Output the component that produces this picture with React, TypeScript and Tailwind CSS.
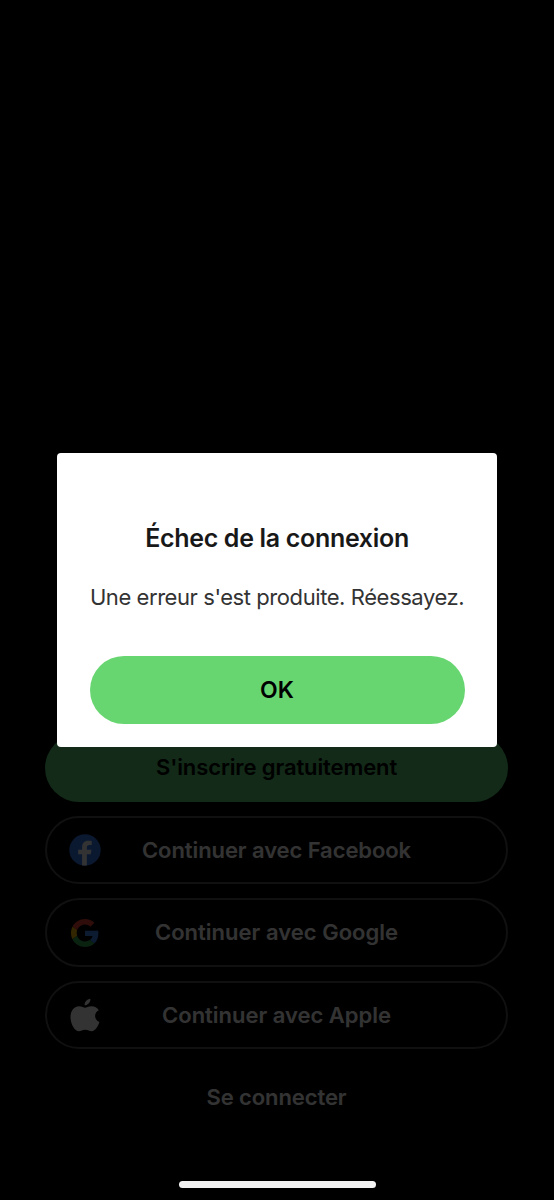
import type { ReactNode } from 'react';

function FacebookIcon() {
  return (
    <svg viewBox="0 0 32 32" className="h-8 w-8 shrink-0">
      <circle cx="16" cy="16" r="15.7" fill="#3b7cf0" />
      <path
        fill="#ffffff"
        d="M13.1 31.4V20.3H9.2V15.8h3.9v-2.6c0-4.2 2.4-6.5 6-6.5 1.4 0 2.7.1 3.6.3v3.9h-2.4c-1.8 0-2.5 1-2.5 2.5v2.4h4.7l-.8 4.5h-3.9v11.1a16 16 0 0 1-4.5 0z"
      />
    </svg>
  );
}

function GoogleIcon() {
  return (
    <svg viewBox="0 0 48 48" className="h-7 w-7 shrink-0">
      <path fill="#EA4335" d="M24 9.5c3.54 0 6.71 1.22 9.21 3.6l6.85-6.85C35.9 2.38 30.47 0 24 0 14.62 0 6.51 5.38 2.56 13.22l7.98 6.19C12.43 13.72 17.74 9.5 24 9.5z" />
      <path fill="#4285F4" d="M46.98 24.55c0-1.57-.15-3.09-.38-4.55H24v9.02h12.94c-.58 2.96-2.26 5.48-4.78 7.18l7.73 6c4.51-4.18 7.09-10.36 7.09-17.65z" />
      <path fill="#FBBC05" d="M10.53 28.59c-.48-1.45-.76-2.99-.76-4.59s.27-3.14.76-4.59l-7.98-6.19C.92 16.46 0 20.12 0 24c0 3.88.92 7.54 2.56 10.78l7.97-6.19z" />
      <path fill="#34A853" d="M24 48c6.48 0 11.93-2.13 15.89-5.81l-7.73-6c-2.15 1.45-4.92 2.3-8.16 2.3-6.26 0-11.57-4.22-13.47-9.91l-7.98 6.19C6.51 42.62 14.62 48 24 48z" />
    </svg>
  );
}

function AppleIcon() {
  return (
    <svg viewBox="0 0 32 36" className="h-9 w-8 shrink-0" fill="currentColor">
      <path d="M15.6 8.3C15.3 4.9 18.1 2 21.4 1.7C21.7 5.1 18.9 8.1 15.6 8.3Z" />
      <path d="M16 10.7C17.5 10.7 19.4 9.2 22.4 9.2C25.6 9.2 28.3 10.6 29.8 13.2C27.5 14.5 26.1 16.3 26.1 18.9C26.1 21.7 27.7 23.9 30.4 25C29.4 28.5 26.2 34.2 22.8 34.2C20.4 34.2 19 32.8 16.3 32.8C13.5 32.8 12 34.2 9.9 34.2C5.8 34.2 1.5 27.1 1.5 20.2C1.5 13.3 5.6 9.3 10 9.3C12.7 9.3 14.8 10.7 16 10.7Z" />
    </svg>
  );
}

function ProviderButton({ icon, children }: { icon: ReactNode; children: ReactNode }) {
  return (
    <button className="grid h-[68.5px] w-full shrink-0 grid-cols-[32px_1fr_32px] items-center rounded-full border-2 border-[#505050] px-[22px]">
      <span className="flex items-center justify-center">{icon}</span>
      <span className="whitespace-nowrap text-center">{children}</span>
    </button>
  );
}

export default function App() {
  return (
    <main className="relative flex h-[1200px] w-[554px] flex-col overflow-hidden bg-black font-['Inter',sans-serif]">
      <section className="flex flex-1 flex-col justify-end gap-[14px] pr-[46px] pb-[68.6px] pl-[45px] text-[22px] font-semibold text-white">
        <button className="h-[68px] w-full shrink-0 rounded-full bg-[#5ad073] tracking-[-0.11px] text-black">
          S'inscrire gratuitement
        </button>
        <ProviderButton icon={<FacebookIcon />}>
          <span className="tracking-[-0.08px]">Continuer avec Facebook</span>
        </ProviderButton>
        <ProviderButton icon={<GoogleIcon />}>
          <span className="tracking-[0.02px]">Continuer avec Google</span>
        </ProviderButton>
        <ProviderButton icon={<AppleIcon />}>
          <span className="tracking-[-0.02px]">Continuer avec Apple</span>
        </ProviderButton>
        <button className="h-[68px] shrink-0 tracking-[-0.1px]">Se connecter</button>
      </section>

      <div className="absolute inset-0 flex items-center justify-center bg-black/80">
        <div
          role="dialog"
          aria-modal="true"
          className="flex h-[294px] w-[440px] flex-col items-center rounded bg-white px-[32.5px] pt-[69px] text-center"
        >
          <h1 className="whitespace-nowrap text-[25px] leading-8 font-semibold tracking-[-0.32px] text-[#181818]">
            Échec de la connexion
          </h1>
          <p className="mt-[27px] whitespace-nowrap text-[22px] leading-8 tracking-[-0.43px] text-[#333333]">
            Une erreur s'est produite. Réessayez.
          </p>
          <button className="mt-[43px] h-[68px] w-full shrink-0 rounded-full bg-[#67d671] text-[23px] font-semibold text-black">
            OK
          </button>
        </div>
      </div>

      <div className="absolute bottom-[12px] left-[178.5px] h-[7px] w-[197.5px] rounded-full bg-[#f3f3f3]" />
    </main>
  );
}
